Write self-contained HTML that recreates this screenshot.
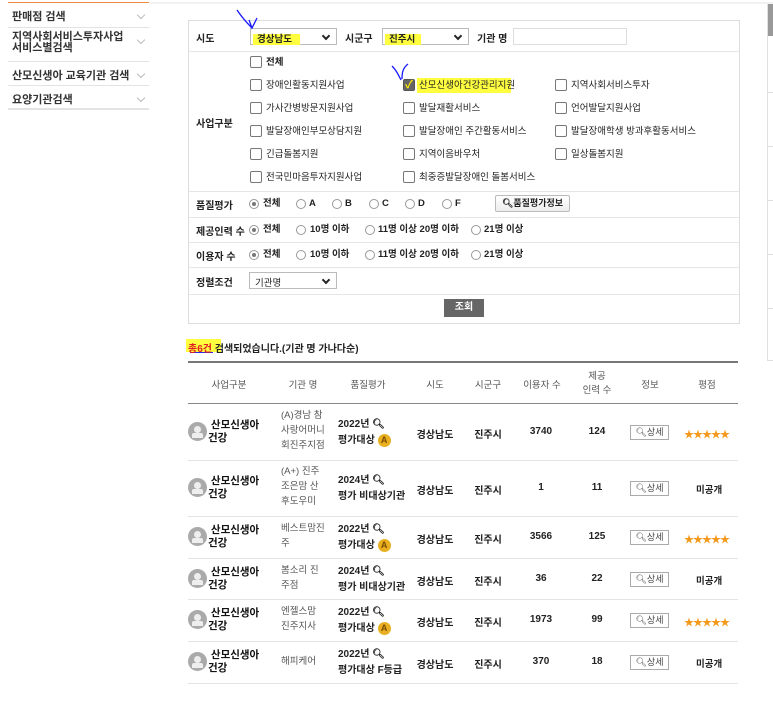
<!DOCTYPE html>
<html><head><meta charset="utf-8"><style>
*{margin:0;padding:0;box-sizing:border-box}
body{width:773px;height:707px;background:#fff;font-family:"Liberation Sans","Noto Sans CJK KR",sans-serif;color:#222;position:relative;overflow:hidden;font-size:10px}
.a{position:absolute;white-space:nowrap}
.nav{font-size:11px;color:#333;font-weight:bold}
.chev{position:absolute;left:138px;width:6px;height:6px;border-right:1px solid #bbb;border-bottom:1px solid #bbb;transform:rotate(45deg)}
.hl{position:absolute;left:8px;width:141px;height:1px;background:#e3e3e3}
.fl{position:absolute;left:189px;width:550px;height:1px;background:#e6e6e6}
.lab{font-weight:bold;font-size:10px;color:#222}
.cb{position:absolute;width:12px;height:12px;border:1px solid #777;border-radius:2px;background:#fff}
.ct{font-size:9.5px;color:#222;line-height:14px}
.rd{position:absolute;width:10px;height:10px;border:1px solid #999;border-radius:50%;background:#fff}
.rd.on::after{content:"";position:absolute;left:2px;top:2px;width:4px;height:4px;border-radius:50%;background:#777}
.sel{position:absolute;height:17px;border:1px solid #bbb;background:#fff;font-size:9.5px;font-weight:bold;padding:2px 5px}
.sel::after{content:"";position:absolute;right:7px;top:4px;width:4px;height:4px;border-right:2px solid #222;border-bottom:2px solid #222;transform:rotate(45deg)}
.th{font-size:9.5px;color:#555;text-align:center;transform:translateX(-50%)}
.td{font-size:10px;color:#222;transform:translateX(-50%);font-weight:bold}
.rl{position:absolute;left:188px;width:550px;height:1px;background:#e4e4e4}
.ic{position:absolute;left:188px;width:19px;height:19px;border-radius:50%;background:#aaa}
.ic::after{content:"";position:absolute;left:6px;top:4px;width:7px;height:7px;border-radius:50%;background:#eee}
.ic::before{content:"";position:absolute;left:4px;top:11px;width:11px;height:5px;background:#eee;border-radius:2px 2px 0 0}
.bn{font-weight:bold;font-size:10.5px;color:#111;line-height:13px}
.nm{font-size:9.5px;color:#555;line-height:15px}
.q{font-size:10px;color:#222;line-height:16px;font-weight:bold}
.ga{display:inline-block;width:13px;height:13px;border-radius:50%;background:#e8b020;color:#7a4a00;font-size:9px;text-align:center;line-height:13px;vertical-align:middle}
.btn{position:absolute;left:630px;width:39px;height:15px;border:1px solid #aaa;font-size:9px;color:#444;background:#fff;text-align:center;line-height:13px}
.st{color:#f39a1c;font-size:10px;letter-spacing:-1px}
.gm{font-size:9.5px;font-weight:bold;color:#222}
</style></head><body>
<div class="a" style="left:150px;top:2px;width:623px;height:2px;background:#f2f2f2"></div>
<div class="a" style="left:8px;top:2px;width:141px;height:1px;background:#f08a3c"></div>
<div class="a nav" style="left:12px;top:8px">판매점 검색</div><div class="chev" style="top:12px"></div>
<div class="hl" style="top:27px"></div>
<div class="a nav" style="left:12px;top:32px;line-height:11px">지역사회서비스투자사업<br>서비스별검색</div><div class="chev" style="top:37px"></div>
<div class="hl" style="top:61px"></div>
<div class="a nav" style="left:12px;top:67px">산모신생아 교육기관 검색</div><div class="chev" style="top:71px"></div>
<div class="hl" style="top:85px"></div>
<div class="a nav" style="left:12px;top:91px">요양기관검색</div><div class="chev" style="top:95px"></div>
<div class="hl" style="top:108px;height:2px"></div>
<div class="a" style="left:767px;top:4px;width:1px;height:357px;background:#e0e0e0"></div>
<div class="a" style="left:768px;top:4px;width:5px;height:32px;background:#999"></div>
<div class="a" style="left:768px;top:92px;width:5px;height:1px;background:#ddd"></div>
<div class="a" style="left:768px;top:146px;width:5px;height:1px;background:#ddd"></div>
<div class="a" style="left:768px;top:200px;width:5px;height:1px;background:#ddd"></div>
<div class="a" style="left:768px;top:254px;width:5px;height:1px;background:#ddd"></div>
<div class="a" style="left:768px;top:308px;width:5px;height:1px;background:#ddd"></div>
<div class="a" style="left:768px;top:360px;width:5px;height:1px;background:#ddd"></div>
<div class="a" style="left:188px;top:20px;width:552px;height:304px;border:1px solid #ddd"></div>
<div class="fl" style="top:51px"></div>
<div class="fl" style="top:191px"></div>
<div class="fl" style="top:217px"></div>
<div class="fl" style="top:242px"></div>
<div class="fl" style="top:267px"></div>
<div class="fl" style="top:294px"></div>
<div class="a lab" style="left:196px;top:30px">시도</div>
<div class="sel" style="left:250px;top:28px;width:87px"><span style="background:#ffff40;padding:0 8px 0 4px;margin-left:-3px">경상남도</span></div>
<div class="a lab" style="left:345px;top:30px">시군구</div>
<div class="sel" style="left:382px;top:28px;width:87px"><span style="background:#ffff40;padding:0 6px 0 4px;margin-left:-3px">진주시</span></div>
<div class="a lab" style="left:477px;top:30px">기관 명</div>
<div class="a" style="left:513px;top:28px;width:114px;height:17px;border:1px solid #ddd"></div>
<svg class="a" style="left:232px;top:8px" width="30" height="30"><path d="M5 2 C9 8 14 14 20 20 M17 12 L20 20 L25 10" stroke="#1a1aff" stroke-width="1.3" fill="none"/></svg>
<svg class="a" style="left:390px;top:62px" width="22" height="22"><path d="M2 4 C6 8 8 12 11 18 M12 17 C12 10 13 6 18 2" stroke="#1a1aff" stroke-width="1.3" fill="none"/></svg>
<div class="a lab" style="left:196px;top:115px">사업구분</div>
<div class="cb" style="left:250px;top:56px"></div><div class="a ct" style="left:266px;top:56px;font-weight:bold">전체</div>
<div class="cb" style="left:250px;top:79px"></div><div class="a ct" style="left:266px;top:79px">장애인활동지원사업</div>
<div class="cb" style="left:250px;top:102px"></div><div class="a ct" style="left:266px;top:102px">가사간병방문지원사업</div>
<div class="cb" style="left:250px;top:125px"></div><div class="a ct" style="left:266px;top:125px">발달장애인부모상담지원</div>
<div class="cb" style="left:250px;top:148px"></div><div class="a ct" style="left:266px;top:148px">긴급돌봄지원</div>
<div class="cb" style="left:250px;top:171px"></div><div class="a ct" style="left:266px;top:171px">전국민마음투자지원사업</div>
<div class="a" style="left:417px;top:78px;width:94px;height:15px;background:#ffff40"></div>
<div class="cb" style="left:403px;top:79px;background:#666;border-color:#555;color:#ffea00;font-size:11px;line-height:10px;text-align:center;font-weight:bold">✓</div><div class="a ct" style="left:419px;top:79px">산모신생아건강관리지원</div>
<div class="cb" style="left:403px;top:102px"></div><div class="a ct" style="left:419px;top:102px">발달재활서비스</div>
<div class="cb" style="left:403px;top:125px"></div><div class="a ct" style="left:419px;top:125px">발달장애인 주간활동서비스</div>
<div class="cb" style="left:403px;top:148px"></div><div class="a ct" style="left:419px;top:148px">지역이음바우처</div>
<div class="cb" style="left:403px;top:171px"></div><div class="a ct" style="left:419px;top:171px">최중증발달장애인 돌봄서비스</div>
<div class="cb" style="left:555px;top:79px"></div><div class="a ct" style="left:571px;top:79px">지역사회서비스투자</div>
<div class="cb" style="left:555px;top:102px"></div><div class="a ct" style="left:571px;top:102px">언어발달지원사업</div>
<div class="cb" style="left:555px;top:125px"></div><div class="a ct" style="left:571px;top:125px">발달장애학생 방과후활동서비스</div>
<div class="cb" style="left:555px;top:148px"></div><div class="a ct" style="left:571px;top:148px">일상돌봄지원</div>
<div class="a lab" style="left:196px;top:197px">품질평가</div>
<div class="rd on" style="left:249px;top:199px"></div><div class="a ct" style="left:263px;top:197px;font-weight:bold">전체</div>
<div class="rd" style="left:296px;top:199px"></div><div class="a ct" style="left:309px;top:197px;font-weight:bold">A</div>
<div class="rd" style="left:332px;top:199px"></div><div class="a ct" style="left:345px;top:197px;font-weight:bold">B</div>
<div class="rd" style="left:369px;top:199px"></div><div class="a ct" style="left:382px;top:197px;font-weight:bold">C</div>
<div class="rd" style="left:405px;top:199px"></div><div class="a ct" style="left:418px;top:197px;font-weight:bold">D</div>
<div class="rd" style="left:442px;top:199px"></div><div class="a ct" style="left:455px;top:197px;font-weight:bold">F</div>
<div class="a" style="left:495px;top:195px;width:75px;height:17px;border:1px solid #bbb;border-radius:2px;background:linear-gradient(#fff,#eee);font-size:9px;font-weight:bold;text-align:center;line-height:15px">🔍︎품질평가정보</div>
<div class="a lab" style="left:196px;top:223px">제공인력 수</div>
<div class="rd on" style="left:249px;top:225px"></div><div class="a ct" style="left:263px;top:223px;font-weight:bold">전체</div>
<div class="rd" style="left:296px;top:225px"></div><div class="a ct" style="left:310px;top:223px;font-weight:bold">10명 이하</div>
<div class="rd" style="left:365px;top:225px"></div><div class="a ct" style="left:378px;top:223px;font-weight:bold">11명 이상 20명 이하</div>
<div class="rd" style="left:471px;top:225px"></div><div class="a ct" style="left:484px;top:223px;font-weight:bold">21명 이상</div>
<div class="a lab" style="left:196px;top:248px">이용자 수</div>
<div class="rd on" style="left:249px;top:250px"></div><div class="a ct" style="left:263px;top:248px;font-weight:bold">전체</div>
<div class="rd" style="left:296px;top:250px"></div><div class="a ct" style="left:310px;top:248px;font-weight:bold">10명 이하</div>
<div class="rd" style="left:365px;top:250px"></div><div class="a ct" style="left:378px;top:248px;font-weight:bold">11명 이상 20명 이하</div>
<div class="rd" style="left:471px;top:250px"></div><div class="a ct" style="left:484px;top:248px;font-weight:bold">21명 이상</div>
<div class="a lab" style="left:196px;top:274px">정렬조건</div>
<div class="sel" style="left:249px;top:272px;width:88px;font-weight:normal">기관명</div>
<div class="a" style="left:444px;top:299px;width:40px;height:18px;background:#666;color:#fff;font-size:10px;text-align:center;line-height:18px;font-weight:bold">조회</div>
<div class="a" style="left:186px;top:339px;width:35px;height:13px;background:#ffff40"></div>
<div class="a" style="left:190px;top:352px;width:23px;height:1px;background:#2a2ae0"></div>
<div class="a" style="left:188px;top:340px;font-size:10px;font-weight:bold"><span style="color:#e02020">총6건</span> 검색되었습니다.(기관 명 가나다순)</div>
<div class="a" style="left:188px;top:361px;width:550px;height:2px;background:#777"></div>
<div class="a" style="left:188px;top:403px;width:550px;height:1px;background:#888"></div>
<div class="a th" style="left:229px;top:377px">사업구분</div>
<div class="a th" style="left:303px;top:377px">기관 명</div>
<div class="a th" style="left:368px;top:377px">품질평가</div>
<div class="a th" style="left:435px;top:377px">시도</div>
<div class="a th" style="left:488px;top:377px">시군구</div>
<div class="a th" style="left:542px;top:377px">이용자 수</div>
<div class="a th" style="left:597px;top:370px;line-height:14px">제공<br>인력 수</div>
<div class="a th" style="left:650px;top:377px">정보</div>
<div class="a th" style="left:707px;top:377px">평점</div>
<div class="rl" style="top:460px"></div><div class="rl" style="top:516px"></div><div class="rl" style="top:558px"></div><div class="rl" style="top:599px"></div><div class="rl" style="top:641px"></div><div class="rl" style="top:683px"></div>
<div class="ic" style="top:422px"></div><div class="a bn" style="left:208px;top:419px">&nbsp;산모신생아<br>건강</div>
<div class="a nm" style="left:281px;top:408px">(A)경남 참<br>사랑어머니<br>회진주지점</div>
<div class="a q" style="left:338px;top:417px">2022년 🔍︎<br>평가대상 <span class="ga">A</span></div>
<div class="a td" style="left:435px;top:426px">경상남도</div><div class="a td" style="left:488px;top:426px">진주시</div>
<div class="a td" style="left:541px;top:426px">3740</div><div class="a td" style="left:597px;top:426px">124</div>
<div class="btn" style="top:425px">🔍︎상세</div><div class="a st" style="left:684px;top:426px">★★★★★</div>
<div class="ic" style="top:478px"></div><div class="a bn" style="left:208px;top:475px">&nbsp;산모신생아<br>건강</div>
<div class="a nm" style="left:281px;top:464px">(A+) 진주<br>조은맘 산<br>후도우미</div>
<div class="a q" style="left:338px;top:473px">2024년 🔍︎<br>평가 비대상기관</div>
<div class="a td" style="left:435px;top:482px">경상남도</div><div class="a td" style="left:488px;top:482px">진주시</div>
<div class="a td" style="left:541px;top:482px">1</div><div class="a td" style="left:597px;top:482px">11</div>
<div class="btn" style="top:481px">🔍︎상세</div><div class="a gm" style="left:696px;top:482px">미공개</div>
<div class="ic" style="top:527px"></div><div class="a bn" style="left:208px;top:524px">&nbsp;산모신생아<br>건강</div>
<div class="a nm" style="left:281px;top:521px">베스트맘진<br>주</div>
<div class="a q" style="left:338px;top:522px">2022년 🔍︎<br>평가대상 <span class="ga">A</span></div>
<div class="a td" style="left:435px;top:531px">경상남도</div><div class="a td" style="left:488px;top:531px">진주시</div>
<div class="a td" style="left:541px;top:531px">3566</div><div class="a td" style="left:597px;top:531px">125</div>
<div class="btn" style="top:530px">🔍︎상세</div><div class="a st" style="left:684px;top:531px">★★★★★</div>
<div class="ic" style="top:569px"></div><div class="a bn" style="left:208px;top:566px">&nbsp;산모신생아<br>건강</div>
<div class="a nm" style="left:281px;top:563px">봄소리 진<br>주점</div>
<div class="a q" style="left:338px;top:564px">2024년 🔍︎<br>평가 비대상기관</div>
<div class="a td" style="left:435px;top:573px">경상남도</div><div class="a td" style="left:488px;top:573px">진주시</div>
<div class="a td" style="left:541px;top:573px">36</div><div class="a td" style="left:597px;top:573px">22</div>
<div class="btn" style="top:572px">🔍︎상세</div><div class="a gm" style="left:696px;top:573px">미공개</div>
<div class="ic" style="top:610px"></div><div class="a bn" style="left:208px;top:607px">&nbsp;산모신생아<br>건강</div>
<div class="a nm" style="left:281px;top:604px">엔젤스맘<br>진주지사</div>
<div class="a q" style="left:338px;top:605px">2022년 🔍︎<br>평가대상 <span class="ga">A</span></div>
<div class="a td" style="left:435px;top:614px">경상남도</div><div class="a td" style="left:488px;top:614px">진주시</div>
<div class="a td" style="left:541px;top:614px">1973</div><div class="a td" style="left:597px;top:614px">99</div>
<div class="btn" style="top:613px">🔍︎상세</div><div class="a st" style="left:684px;top:614px">★★★★★</div>
<div class="ic" style="top:652px"></div><div class="a bn" style="left:208px;top:649px">&nbsp;산모신생아<br>건강</div>
<div class="a nm" style="left:281px;top:654px">해피케어</div>
<div class="a q" style="left:338px;top:647px">2022년 🔍︎<br>평가대상 F등급</div>
<div class="a td" style="left:435px;top:656px">경상남도</div><div class="a td" style="left:488px;top:656px">진주시</div>
<div class="a td" style="left:541px;top:656px">370</div><div class="a td" style="left:597px;top:656px">18</div>
<div class="btn" style="top:655px">🔍︎상세</div><div class="a gm" style="left:696px;top:656px">미공개</div>
</body></html>
